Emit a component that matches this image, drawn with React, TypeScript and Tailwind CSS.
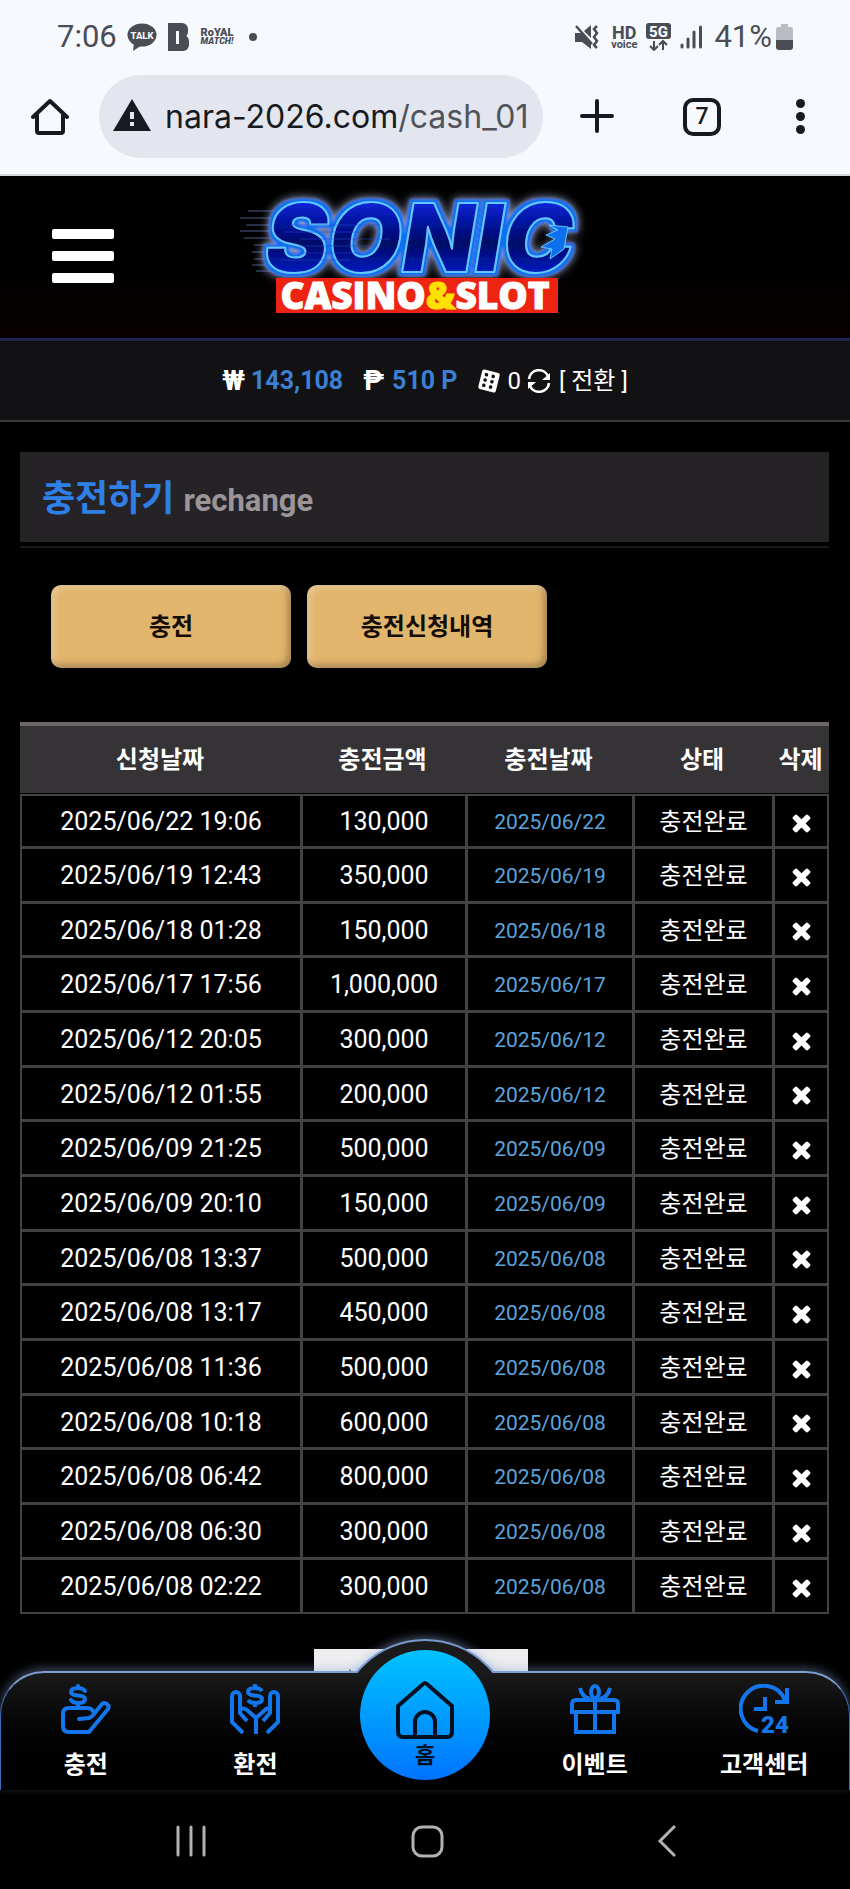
import type { ReactNode } from "react";

type Row = {
    requested: string;
    amount: string;
    charged: string;
};

const rows: Row[] = [
    { requested: "2025/06/22 19:06", amount: "130,000", charged: "2025/06/22" },
    { requested: "2025/06/19 12:43", amount: "350,000", charged: "2025/06/19" },
    { requested: "2025/06/18 01:28", amount: "150,000", charged: "2025/06/18" },
    { requested: "2025/06/17 17:56", amount: "1,000,000", charged: "2025/06/17" },
    { requested: "2025/06/12 20:05", amount: "300,000", charged: "2025/06/12" },
    { requested: "2025/06/12 01:55", amount: "200,000", charged: "2025/06/12" },
    { requested: "2025/06/09 21:25", amount: "500,000", charged: "2025/06/09" },
    { requested: "2025/06/09 20:10", amount: "150,000", charged: "2025/06/09" },
    { requested: "2025/06/08 13:37", amount: "500,000", charged: "2025/06/08" },
    { requested: "2025/06/08 13:17", amount: "450,000", charged: "2025/06/08" },
    { requested: "2025/06/08 11:36", amount: "500,000", charged: "2025/06/08" },
    { requested: "2025/06/08 10:18", amount: "600,000", charged: "2025/06/08" },
    { requested: "2025/06/08 06:42", amount: "800,000", charged: "2025/06/08" },
    { requested: "2025/06/08 06:30", amount: "300,000", charged: "2025/06/08" },
    { requested: "2025/06/08 02:22", amount: "300,000", charged: "2025/06/08" },
];

function StatusBar() {
    return (
        <div className="flex h-[74px] items-center justify-between px-[57px] font-[Roboto,sans-serif] text-[#4a4d54]">
            <div className="flex items-center">
                <span className="w-[60px] text-[31px] leading-8">7:06</span>
                <svg viewBox="0 0 30 28" className="ml-[10px] h-7 w-[30px]">
                    <ellipse cx="15" cy="12" rx="14.5" ry="11.5" fill="currentColor" />
                    <path d="M7 20 L6 28 L15 22 Z" fill="currentColor" />
                    <text
                        x="15"
                        y="15.5"
                        textAnchor="middle"
                        fontSize="9.5"
                        fontWeight="800"
                        fill="#f6f9fe"
                    >
                        TALK
                    </text>
                </svg>
                <svg viewBox="0 0 21 28" className="ml-[11px] h-7 w-[21px]">
                    <rect width="14" height="28" fill="currentColor" />
                    <rect x="4" width="16" height="15" rx="6" fill="currentColor" />
                    <rect x="4" y="12" width="17" height="16" rx="6" fill="currentColor" />
                    <rect x="8" y="8" width="3" height="13" fill="#f6f9fe" />
                </svg>
                <div className="ml-[10px] w-9 text-center text-[11px] leading-[9px] font-black">
                    <div>RoYAL</div>
                    <div className="text-[9px] italic">MATCH!</div>
                </div>
                <span className="ml-[14px] size-2 rounded-full bg-[#4a4d54]" />
            </div>

            <div className="flex items-center">
                <svg viewBox="0 0 24 24" className="h-6 w-6" fill="currentColor">
                    <path d="M9 6 L16 0 V13 Z" />
                    <path
                        d="M1 1 L17 19 M22 1 L19 4 L22 8 L19 12 L22 16 L19 20 L22 23"
                        stroke="currentColor"
                        strokeWidth="2.5"
                        fill="none"
                    />
                    <path d="M0 8 H6 L16 18 V24 L7 17 H0 Z" />
                </svg>
                <div className="ml-3 text-center">
                    <div className="text-[18px] leading-[14px] font-bold">HD</div>
                    <div className="text-[11px] leading-[9px] font-bold">voice</div>
                </div>
                <svg viewBox="0 0 26 28" className="ml-[9px] h-7 w-[26px]">
                    <rect width="25" height="16" rx="3" fill="currentColor" />
                    <text
                        x="12.5"
                        y="13.5"
                        textAnchor="middle"
                        fontSize="15"
                        fontWeight="800"
                        fill="#f6f9fe"
                    >
                        5G
                    </text>
                    <path
                        d="M8 18 V26 M4 23 L8 27 L12 23 M17 27 V19 M13 22 L17 18 L21 22"
                        stroke="currentColor"
                        strokeWidth="2"
                        fill="none"
                    />
                </svg>
                <svg viewBox="0 0 22 24" className="ml-2 h-6 w-[22px]">
                    <path
                        d="M2 20 V22 M8 14 V22 M14 7 V22 M20.5 2 V22"
                        stroke="currentColor"
                        strokeWidth="3"
                        strokeLinecap="round"
                    />
                </svg>
                <span className="ml-3 text-[31px] leading-8">41%</span>
                <svg viewBox="0 0 17 26" className="ml-1 h-[26px] w-[17px]">
                    <path
                        d="M5 0 H12 V3 H15 Q17 3 17 6 V17 H0 V6 Q0 3 2 3 H5 Z"
                        fill="#b9bcc2"
                    />
                    <path d="M0 16 H17 V23 Q17 26 14 26 H3 Q0 26 0 23 Z" fill="currentColor" />
                </svg>
            </div>
        </div>
    );
}

function AddressBar() {
    return (
        <div className="flex h-[100px] items-start pt-px pl-[31px] text-[#171a20]">
            <button type="button" aria-label="Home page" className="mt-[23px] size-[38px]">
                <svg viewBox="0 0 38 38" fill="none" stroke="currentColor" strokeWidth="4">
                    <path
                        d="M2 19 L19 3 L36 19 M6 17 V33 Q6 35 8 35 H30 Q32 35 32 33 V17"
                        strokeLinecap="round"
                        strokeLinejoin="round"
                    />
                </svg>
            </button>
            <div className="ml-[30px] flex h-[83px] min-w-0 flex-1 items-center rounded-full bg-[#e3e6ee] pr-4 pl-[14px]">
                <svg viewBox="0 0 38 32" className="mb-1 h-8 w-[38px] shrink-0">
                    <path d="M19 0 L38 32 H0 Z" fill="currentColor" />
                    <path d="M19 13 V20 M19 23 V27" stroke="#e3e6ee" strokeWidth="4" />
                </svg>
                <span className="ml-[14px] font-[Inter,sans-serif] text-[32px] leading-[48px] whitespace-nowrap">
                    nara-2026.com<span className="text-[#50535a]">/cash_01</span>
                </span>
            </div>
            <button type="button" aria-label="New tab" className="mt-6 ml-[37px] size-[34px]">
                <svg viewBox="0 0 34 34" stroke="currentColor" strokeWidth="4">
                    <path d="M17 2 V32 M2 17 H32" strokeLinecap="round" />
                </svg>
            </button>
            <button
                type="button"
                className="mt-[23px] ml-[69px] flex size-[38px] items-center justify-center rounded-[10px] border-4 border-[#171a20] font-[Roboto,sans-serif] text-[23px] leading-6 font-medium"
            >
                7
            </button>
            <button
                type="button"
                aria-label="More"
                className="mt-6 mr-[45px] ml-[75px] flex flex-col gap-1"
            >
                <span className="size-[9px] rounded-full bg-[#171a20]" />
                <span className="size-[9px] rounded-full bg-[#171a20]" />
                <span className="size-[9px] rounded-full bg-[#171a20]" />
            </button>
        </div>
    );
}

function Logo() {
    return (
        <svg viewBox="0 0 370 144" className="h-36 w-[370px]" role="img" aria-label="Sonic Casino & Slot">
            <defs>
                <linearGradient id="neon" x1="0" y1="0" x2="0" y2="1">
                    <stop offset="0.1" stopColor="#0a2bf5" />
                    <stop offset="0.55" stopColor="#020766" />
                    <stop offset="0.9" stopColor="#0524e0" />
                </linearGradient>
                {/* solid blue rim plus a soft pale halo around the letters */}
                <filter id="glow" x="-10%" y="-20%" width="120%" height="140%">
                    <feMorphology in="SourceAlpha" operator="dilate" radius="3" result="fat" />
                    <feGaussianBlur in="fat" stdDeviation="1" result="rimShape" />
                    <feFlood floodColor="#0d6fee" />
                    <feComposite in2="rimShape" operator="in" result="rim" />
                    <feGaussianBlur in="fat" stdDeviation="5" result="haloShape" />
                    <feFlood floodColor="#a3b2d8" />
                    <feComposite in2="haloShape" operator="in" result="halo" />
                    <feMerge>
                        <feMergeNode in="halo" />
                        <feMergeNode in="rim" />
                        <feMergeNode in="SourceGraphic" />
                    </feMerge>
                </filter>
            </defs>
            <path
                d="M8 26 H60 M0 33 H60 M6 40 H60 M0 46 H60 M4 53 H60 M14 60 H50 M12 67 H45 M14 74 H40 M12 80 H40 M16 86 H45"
                stroke="#4a5a86"
                strokeWidth="1"
            />
            <text
                x="25"
                y="87"
                fontFamily="Inter, sans-serif"
                fontWeight="900"
                fontStyle="italic"
                fontSize="95"
                strokeLinejoin="round"
                stroke="#63c6ff"
                strokeWidth="2"
                fill="url(#neon)"
                filter="url(#glow)"
            >
                SONIC
            </text>
            {/* spikes cut into the last letter */}
            <path
                d="M328 42 L309 40 L318 45 L306 50 L315 54 L301 62 L312 64 L310 74 L324 64 Z"
                fill="#0d6fee"
                stroke="#63c6ff"
                strokeWidth="1"
            />
            <path
                d="M50 40 H140 M44 47 H120 M60 54 H150 M60 61 H130 M50 68 H120 M40 75 H110"
                stroke="#2b48d8"
                strokeOpacity="0.5"
                strokeWidth="1"
            />
            <rect x="36" y="93" width="282" height="35" fill="#ee2413" />
            <text
                x="175"
                y="124"
                textAnchor="middle"
                fontFamily="Open Sans, sans-serif"
                fontWeight="800"
                fontSize="37"
                fill="#fff"
                stroke="#fff"
                strokeWidth="1"
            >
                CASINO
                <tspan fill="#ffe000" stroke="#ffe000">
                    &amp;
                </tspan>
                SLOT
            </text>
        </svg>
    );
}

function Header() {
    return (
        <header>
            <div className="grid h-[165px] grid-cols-[1fr_auto_1fr] items-center border-b-[3px] border-[#1d2450] bg-linear-to-b from-black to-[#080101]">
                <button type="button" aria-label="Menu" className="mb-[3px] ml-[52px] flex w-[62px] flex-col gap-3">
                    <span className="h-[10px] rounded-[2px] bg-white" />
                    <span className="h-[10px] rounded-[2px] bg-white" />
                    <span className="h-[10px] rounded-[2px] bg-white" />
                </button>
                <Logo />
            </div>
            <div className="flex h-[81px] items-center justify-center border-b-2 border-[#39393b] bg-[#121113] font-[Roboto,'Noto_Sans_CJK_KR',sans-serif] text-2xl text-white">
                <span className="text-[28px] font-bold">₩</span>
                <span className="ml-[6px] text-[25px] font-bold text-[#3b80d3]">143,108</span>
                <span className="ml-5 text-[28px] font-bold">₱</span>
                <span className="ml-2 text-[25px] font-bold text-[#3b80d3]">510 P</span>
                <svg viewBox="0 0 24 24" className="ml-5 size-6">
                    <g transform="rotate(14 12 12)">
                        <rect x="3" y="2" width="18" height="20" rx="2" fill="#fff" />
                        <g fill="#121113">
                            <circle cx="8" cy="6.5" r="1.8" />
                            <circle cx="8" cy="12" r="1.8" />
                            <circle cx="8" cy="17.5" r="1.8" />
                            <circle cx="15" cy="6.5" r="1.8" />
                            <circle cx="15" cy="12" r="1.8" />
                            <circle cx="15" cy="17.5" r="1.8" />
                        </g>
                    </g>
                </svg>
                <span className="ml-1.5">0</span>
                <svg viewBox="0 0 24 24" className="ml-1.5 size-6" fill="none" stroke="#fff" strokeWidth="2.6">
                    <path d="M2 10 A10 10 0 0 1 21 7 M22 14 A10 10 0 0 1 3 17" />
                    <path d="M23 4 V11 H15 Z M1 20 V13 H9 Z" fill="#fff" stroke="none" />
                </svg>
                <button type="button" className="ml-2">
                    [ 전환 ]
                </button>
            </div>
        </header>
    );
}

function CrossIcon() {
    return (
        <svg viewBox="0 0 1792 1792" className="size-[27px]" fill="currentColor">
            <path d="M1490 1322q0 40-28 68l-136 136q-28 28-68 28t-68-28l-294-294-294 294q-28 28-68 28t-68-28l-136-136q-28-28-28-68t28-68l294-294-294-294q-28-28-28-68t28-68l136-136q28-28 68-28t68 28l294 294 294-294q28-28 68-28t68 28l136 136q28 28 28 68t-28 68l-294 294 294 294q28 28 28 68z" />
        </svg>
    );
}

function HistoryTable() {
    return (
        <table className="mt-[54px] w-full table-fixed border-separate border-spacing-0 text-center text-white">
            <colgroup>
                <col className="w-[280px]" />
                <col className="w-[165px]" />
                <col className="w-[167px]" />
                <col className="w-[140px]" />
                <col className="w-[57px]" />
            </colgroup>
            <thead className="bg-[#363336] text-2xl">
                <tr className="h-[72px]">
                    {["신청날짜", "충전금액", "충전날짜", "상태", "삭제"].map((label) => (
                        <th
                            key={label}
                            scope="col"
                            className="border-t-4 border-b border-t-[#6b676a] border-b-black p-0 font-bold whitespace-nowrap"
                        >
                            {label}
                        </th>
                    ))}
                </tr>
            </thead>
            <tbody className="text-[25px] leading-8 [&_td]:border-b-[3px] [&_td]:border-l-[3px] [&_td]:border-[#434144] [&_td]:p-0 [&_td]:pt-0.5 [&_td:first-child]:border-l-2 [&_td:last-child]:border-r-2 [&_tr:first-child_td]:border-t-2 [&_tr:last-child_td]:border-b-2">
                {rows.map((row) => (
                    <tr key={row.requested} className="h-[55px] nth-[3n]:h-[54px]">
                        <td>{row.requested}</td>
                        <td>{row.amount}</td>
                        <td className="text-[21px] text-[#5da4dc]">{row.charged}</td>
                        <td className="text-2xl">충전완료</td>
                        <td>
                            <button type="button" aria-label="삭제" className="flex w-full justify-center">
                                <CrossIcon />
                            </button>
                        </td>
                    </tr>
                ))}
            </tbody>
        </table>
    );
}

const iconClass = "size-[50px] fill-none stroke-[#1476ec] stroke-4";

function DepositIcon() {
    return (
        <svg viewBox="0 0 50 50" className={iconClass} strokeLinejoin="round" strokeLinecap="round">
            <path d="M18 35 L28 34 Q31 33 33 30 L41 20 A4 4 0 0 1 47 25 L28 48 H8 Q2 48 2 42 V30 Q2 24 8 24 H26 Q32 24 33 30" />
            <path d="M24 7 Q22 4 17 4 Q10 4 10 8 Q10 11 17 11.500 Q24 12 24 15 Q24 19 17 19 Q12 19 10 16 M17 2 V4 M17 19 V23" />
        </svg>
    );
}

function WithdrawIcon() {
    return (
        <svg viewBox="0 0 50 50" className={iconClass} strokeLinejoin="round">
            <path d="M13 49 L2 38 V12 A4 4 0 0 1 10 12 V29 L17 37" />
            <path d="M10 26 Q13 23 17 26 L26 34 L35 26 Q37 23 40 26 M26 33 V50" />
            <path d="M37 49 L48 38 V12 A4 4 0 0 0 40 12 V29 L33 37" />
            <path d="M32 7 Q30 4 25 4 Q18 4 18 8 Q18 11 25 11.500 Q32 12 32 15 Q32 19 25 19 Q20 19 18 16 M25 0 V4 M25 19 V23" />
        </svg>
    );
}

function EventIcon() {
    return (
        <svg viewBox="0 0 50 50" className={iconClass}>
            <path d="M2 28 V20 Q2 16 6 16 H44 Q48 16 48 20 V28 Z M6 28 V48 H44 V28 M25 16 V48" />
            <ellipse cx="25" cy="8" rx="4" ry="6" />
            <path d="M10 4 Q12 13 20 15 M40 4 Q38 13 30 15" />
        </svg>
    );
}

function SupportIcon() {
    return (
        <svg viewBox="0 0 50 50" className={iconClass}>
            <path d="M19 47 A23 23 0 1 1 46 16 M48 4 V18 H36 M26 13 V25 H15" />
            <text
                x="22"
                y="49"
                fontFamily="Roboto, sans-serif"
                fontSize="24"
                fontWeight="900"
                fill="#1476ec"
                stroke="none"
            >
                24
            </text>
        </svg>
    );
}

function NavItem({ label, icon }: { label: string; icon: ReactNode }) {
    return (
        <a href="#" className="flex flex-col items-center pt-[11px] text-2xl leading-9 font-bold text-white">
            {icon}
            <span className="mt-[13px]">{label}</span>
        </a>
    );
}

function BottomNav() {
    return (
        <nav className="relative -mt-[60px]">
            <div className="grid h-[119px] grid-cols-5 rounded-t-[44px] border border-t-2 border-b-0 border-[#3c6cb4] border-t-[#7f9fd0] bg-linear-to-b from-[#1a1a1a] to-black shadow-[0_-3px_10px_rgba(140,170,220,0.4)]">
                <NavItem label="충전" icon={<DepositIcon />} />
                <NavItem label="환전" icon={<WithdrawIcon />} />
                <span />
                <NavItem label="이벤트" icon={<EventIcon />} />
                <NavItem label="고객센터" icon={<SupportIcon />} />
            </div>
            {/* raised hump behind the home button */}
            <div className="absolute -top-[46px] left-1/2 h-12 w-[200px] -translate-x-1/2 overflow-hidden pt-[14px]">
                <div className="mx-auto size-[178px] rounded-full border-2 border-[#7797cc] bg-[#1a1a1a] shadow-[0_-2px_10px_rgba(140,170,220,0.5)]" />
            </div>
            <a
                href="#"
                className="absolute -top-[21px] left-1/2 flex size-[130px] -translate-x-1/2 flex-col items-center rounded-full bg-linear-to-b from-[#00c2ff] to-[#0073ff] pt-[30px] text-[22px] leading-8 font-bold text-[#02101f]"
            >
                <svg viewBox="0 0 60 60" className="size-[60px]" fill="none" stroke="currentColor" strokeWidth="4">
                    <path
                        d="M30 3 Q31 3 33 5 L57 26 V52 Q57 57 52 57 H8 Q3 57 3 52 V26 L27 5 Q29 3 30 3 Z M20 57 V42 A10 10 0 0 1 40 42 V57"
                        strokeLinejoin="round"
                    />
                </svg>
                <span>홈</span>
            </a>
        </nav>
    );
}

function SystemNav() {
    return (
        <div className="flex h-[99px] items-start justify-between px-[174px] pt-[34px] text-[#b2b2b2]">
            <button type="button" aria-label="Recents" className="size-[34px]">
                <svg viewBox="0 0 34 34" stroke="currentColor" strokeWidth="3">
                    <path d="M4 3 V31 M17 3 V31 M30 3 V31" strokeLinecap="round" />
                </svg>
            </button>
            <button type="button" aria-label="Home" className="ml-1 size-[34px]">
                <svg viewBox="0 0 34 34" fill="none" stroke="currentColor" strokeWidth="3">
                    <rect x="3" y="3" width="29" height="29" rx="9" />
                </svg>
            </button>
            <button type="button" aria-label="Back" className="size-[34px]">
                <svg viewBox="0 0 34 34" fill="none" stroke="currentColor" strokeWidth="3">
                    <path d="M33 2 L18 17 L33 32" />
                </svg>
            </button>
        </div>
    );
}

export default function App() {
    return (
        <div className="min-h-screen bg-black font-[Roboto,'Noto_Sans_CJK_KR',sans-serif]">
            <div className="border-b-2 border-[#d5d7db] bg-[#f6f9fe]">
                <StatusBar />
                <AddressBar />
            </div>
            <Header />

            <main className="pt-[30px] pr-[21px] pl-5">
                <div className="border-b-2 border-[#19181a] pb-1">
                    <h1 className="flex h-[90px] items-center bg-[#252326] pt-1 pl-[22px] font-bold">
                        <span className="text-4xl text-[#2f80e6]">충전하기</span>
                        <span className="mt-1 ml-[9px] text-[31px] text-[#9b9599]">rechange</span>
                    </h1>
                </div>

                <div className="mt-[37px] flex gap-4 pl-[31px] text-2xl font-bold text-[#140c04]">
                    <button
                        type="button"
                        className="h-[83px] w-60 rounded-[10px] bg-[#e2b56c] shadow-[inset_3px_3px_7px_rgba(255,255,255,0.3),inset_-3px_-3px_7px_rgba(0,0,0,0.3)]"
                    >
                        충전
                    </button>
                    <button
                        type="button"
                        className="h-[83px] w-60 rounded-[10px] bg-[#e2b56c] shadow-[inset_3px_3px_7px_rgba(255,255,255,0.3),inset_-3px_-3px_7px_rgba(0,0,0,0.3)]"
                    >
                        충전신청내역
                    </button>
                </div>

                <HistoryTable />

                {/* pager, mostly tucked under the bottom nav */}
                <div className="mt-[35px] flex justify-center pr-2">
                    <div className="flex h-[82px] w-[214px] items-start bg-[#eeeef0] pt-5 pl-7">
                        <button type="button" aria-label="Previous">
                            <svg viewBox="0 0 16 16" className="size-4">
                                <path d="M8 0 L16 16 H0 Z" fill="#222" />
                            </svg>
                        </button>
                    </div>
                </div>
            </main>

            <BottomNav />
            <SystemNav />
        </div>
    );
}
